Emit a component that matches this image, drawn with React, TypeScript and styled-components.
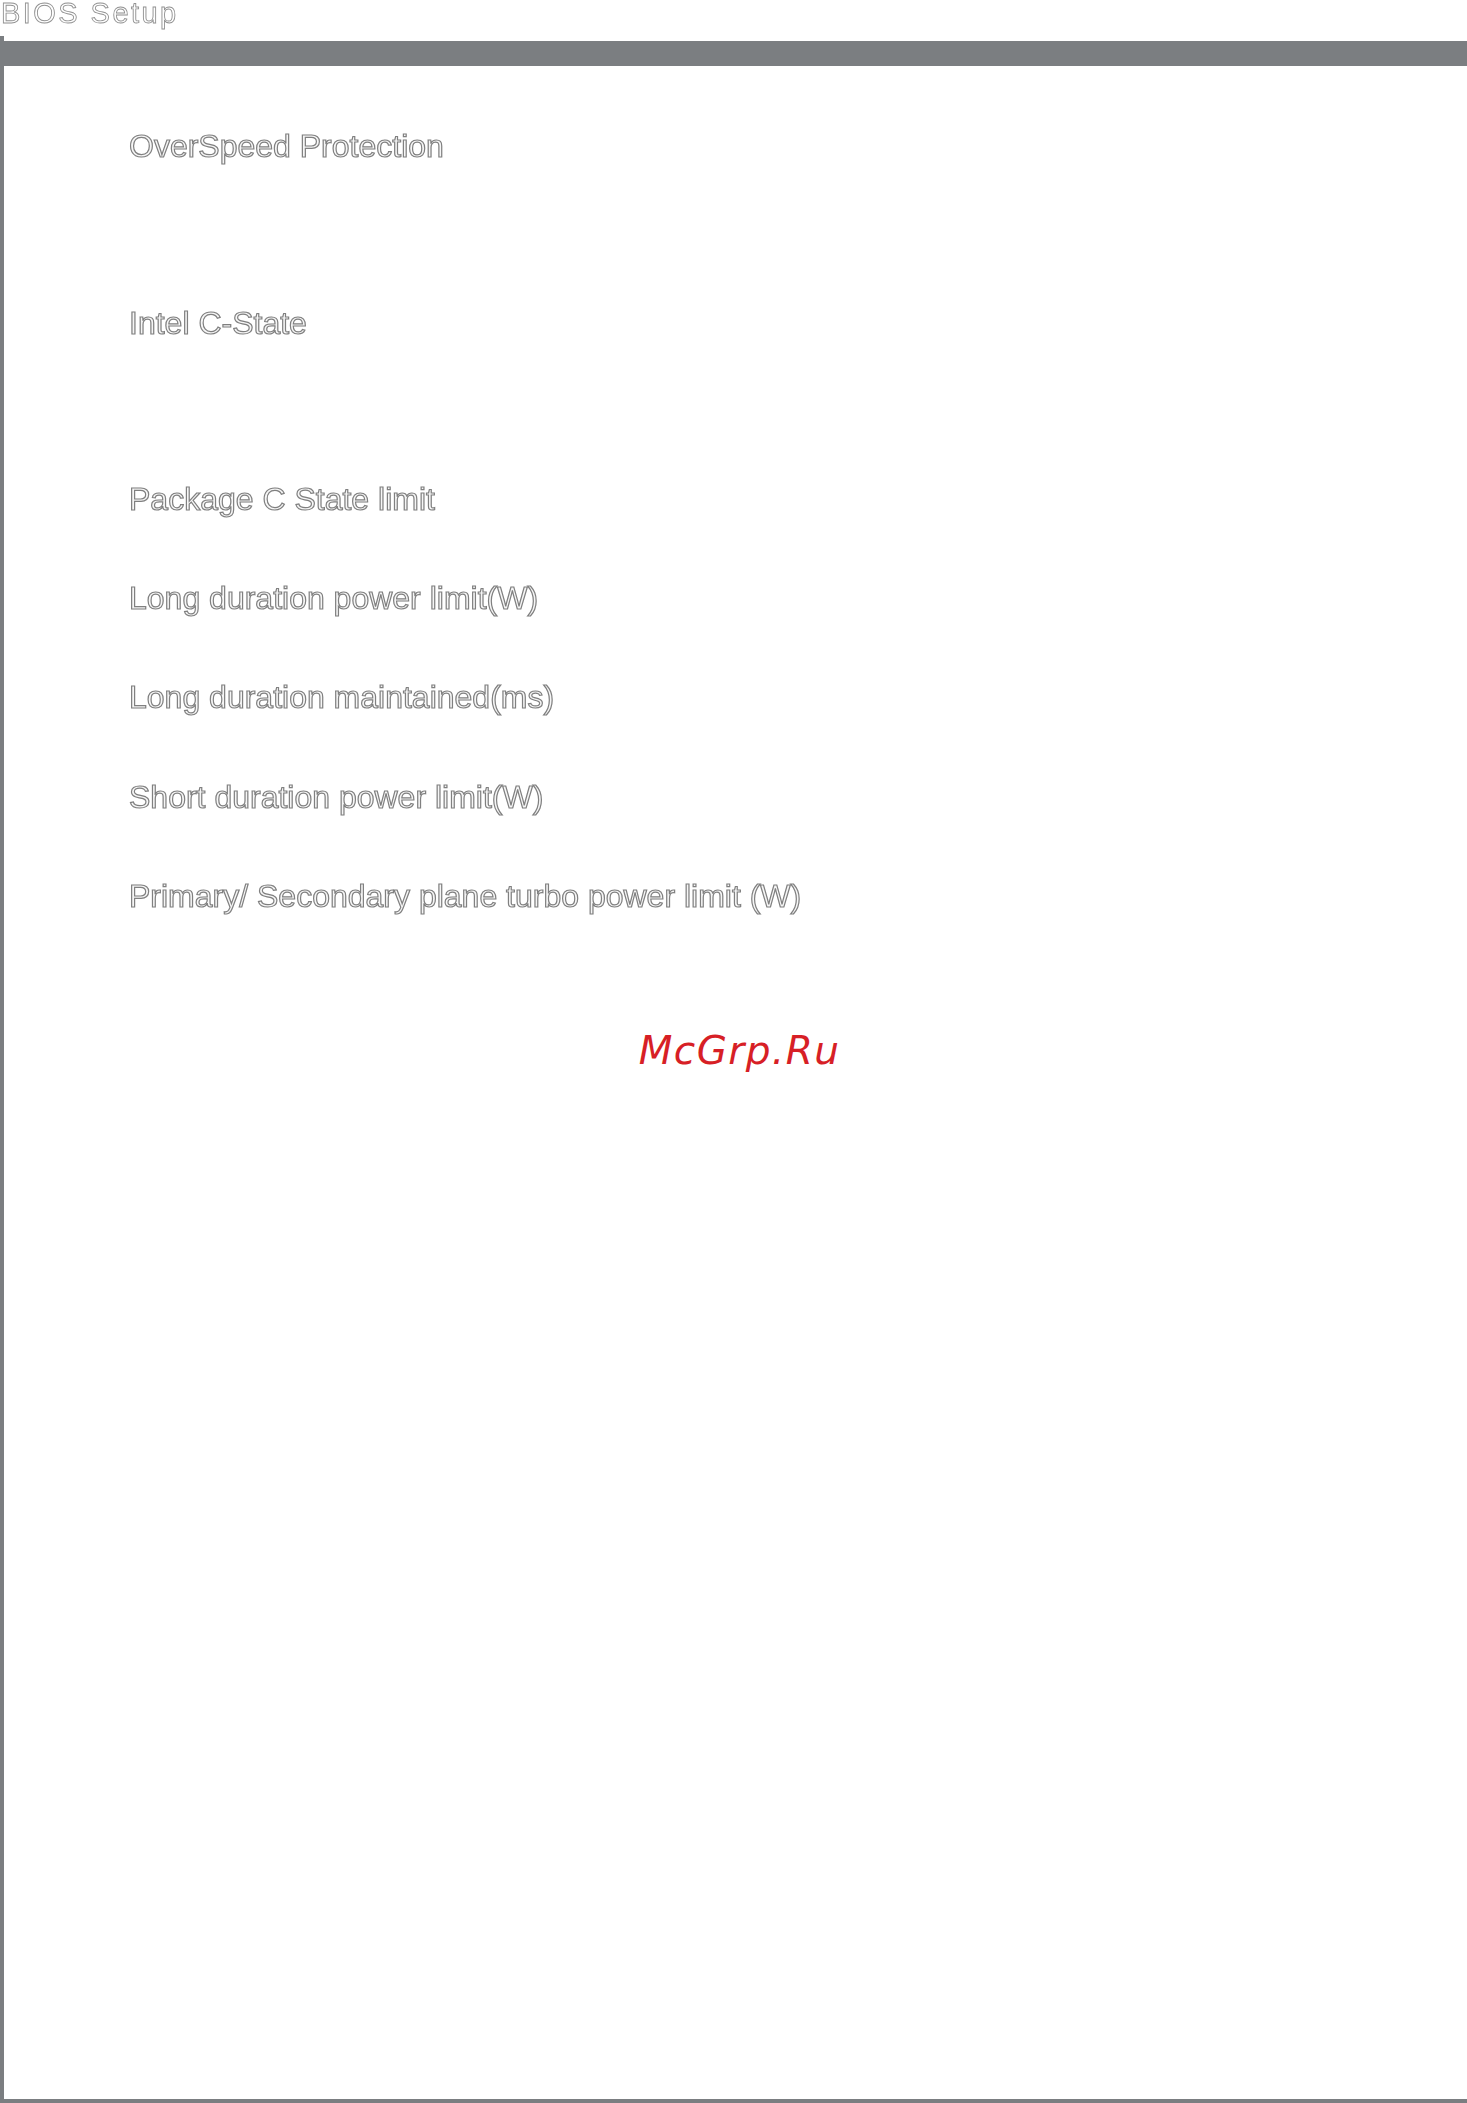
import styled, { createGlobalStyle } from 'styled-components'

const GlobalStyle = createGlobalStyle`
  html,
  body {
    margin: 0;
    padding: 0;
    background: #ffffff;
  }
`
const Page = styled.div`
  display: flex;
  flex-direction: column;
  min-height: 100vh;
  font-family: 'Liberation Sans', Arial, sans-serif;
`
const Heading = styled.div`
  height: 36px;
  padding-left: 1px;
  font-size: 29px;
  line-height: 26px;
  letter-spacing: 2.45px;
  color: #ffffff;
  -webkit-text-stroke: 0.9px #929292;
  will-change: transform;
`
const Frame = styled.div`
  display: flex;
  flex: 1;
  flex-direction: column;
  padding-top: 5px;
  border-bottom: 4px solid #7b7e81;
  border-left: 4px solid #7b7e81;
`
const TopBar = styled.div`
  height: 25px;
  margin-left: -4px;
  background-color: #7b7e81;
`
const Menu = styled.div`
  display: flex;
  flex-direction: column;
  padding-top: 62px;
  padding-left: 125px;
  will-change: transform;
`
const Item = styled.div<{ $gap: number }>`
  height: 36px;
  margin-bottom: ${(p) => p.$gap}px;
  font-size: 32px;
  line-height: 36px;
  color: #f6f6f6;
  white-space: nowrap;
  -webkit-text-stroke: 1.2px #808080;
`
const Stamp = styled.div`
  padding-left: 8px;
  margin-top: 115px;
  font-family: 'DejaVu Sans', sans-serif;
  font-size: 39px;
  font-style: italic;
  line-height: 44px;
  letter-spacing: 1.4px;
  color: #d71f26;
  text-align: center;
`

const items = [
  { label: 'OverSpeed Protection', gap: 141 },
  { label: 'Intel C-State', gap: 140 },
  { label: 'Package C State limit', gap: 63.2 },
  { label: 'Long duration power limit(W)', gap: 63.2 },
  { label: 'Long duration maintained(ms)', gap: 63.2 },
  { label: 'Short duration power limit(W)', gap: 63.2 },
  { label: 'Primary/ Secondary plane turbo power limit (W)', gap: 0 },
]

const App = () => {
  return (
    <Page>
      <GlobalStyle />
      <Heading>BIOS Setup</Heading>
      <Frame>
        <TopBar />
        <Menu>
          {items.map((item) => (
            <Item key={item.label} $gap={item.gap}>
              {item.label}
            </Item>
          ))}
        </Menu>
        <Stamp>McGrp.Ru</Stamp>
      </Frame>
    </Page>
  )
}

export default App
